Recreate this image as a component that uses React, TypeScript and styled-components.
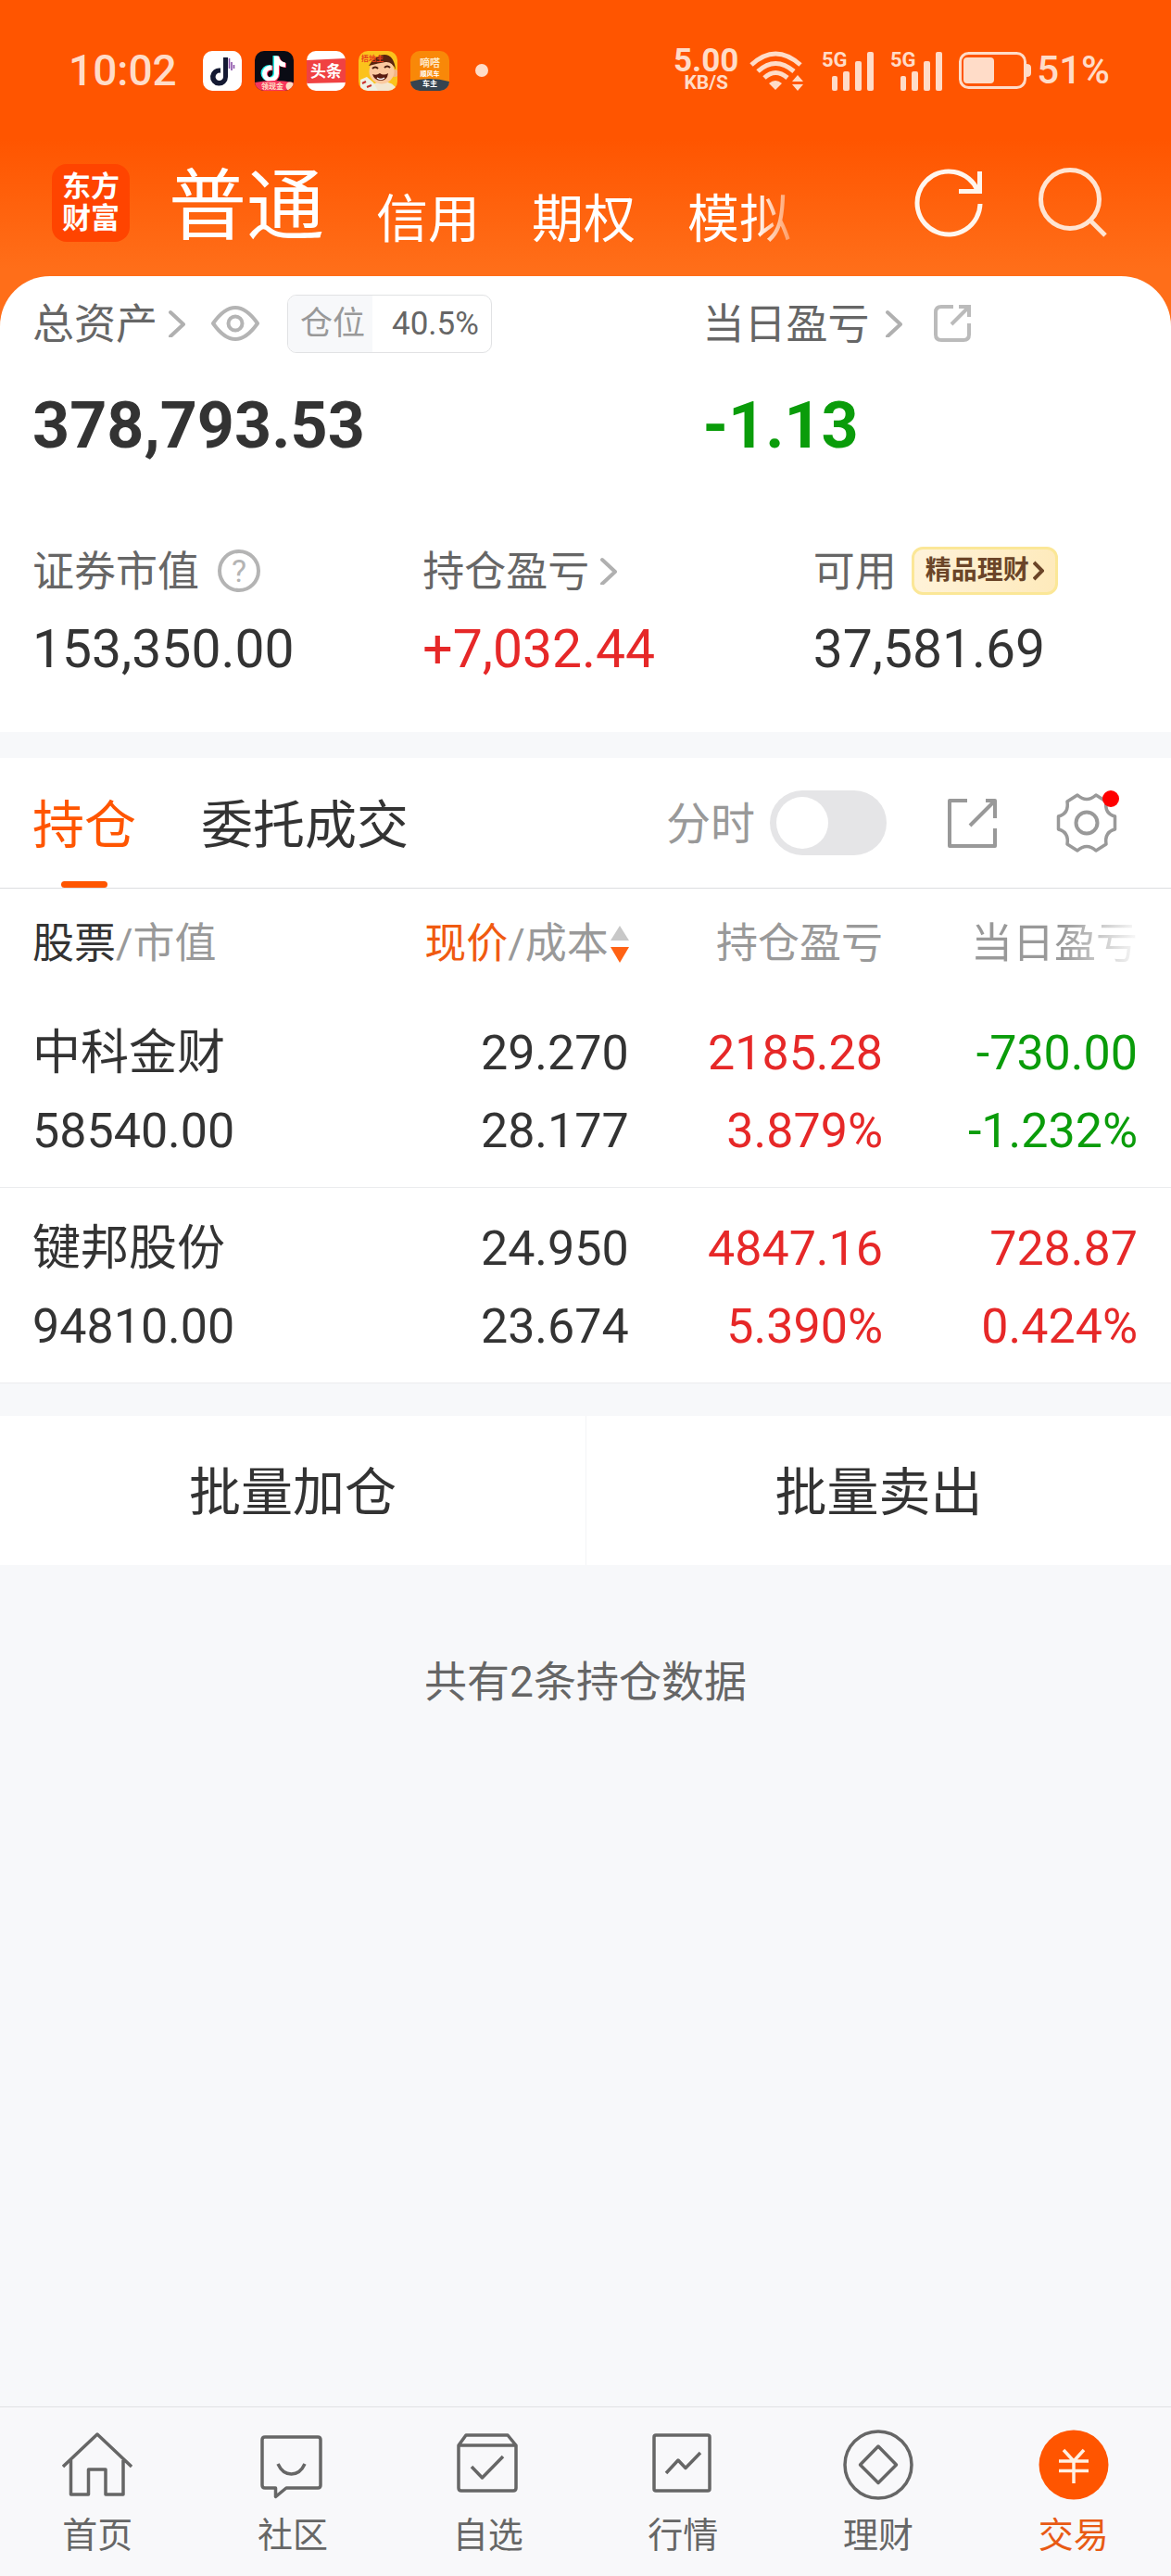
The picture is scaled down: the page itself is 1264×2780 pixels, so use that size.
import React from 'react';
import styled, { createGlobalStyle, css } from 'styled-components';

const C = {
  brand: '#ff5500',
  ink: '#333333',
  label: '#666666',
  muted: '#999999',
  faint: '#b4b4b4',
  line: '#e1e2e4',
  bg: '#f7f8fa',
  up: '#e62828',
  down: '#0a9c0a',
  status: '#ffdcc8',
};

type Tone = 'ink' | 'up' | 'down';

const GlobalStyle = createGlobalStyle`
  *, *::before, *::after { box-sizing: border-box; }
  body {
    margin: 0;
    background: ${C.bg};
    color: ${C.ink};
    font-family: Roboto, "Noto Sans CJK SC", sans-serif;
  }
  button {
    margin: 0;
    padding: 0;
    border: 0;
    background: none;
    color: inherit;
    font: inherit;
    cursor: pointer;
  }
  a { color: inherit; text-decoration: none; }
  h1, dl, dd, p { margin: 0; }
  svg { display: block; flex: none; }
`;

const Page = styled.div`
  display: flex;
  flex-direction: column;
  min-height: 100vh;
`;

const Top = styled.header`
  background: linear-gradient(${C.brand} 0, ${C.brand} 150px, #ff6e19 290px);
`;

/* ---------- status bar ---------- */

const StatusBar = styled.div`
  display: flex;
  align-items: center;
  justify-content: space-between;
  height: 152px;
  padding: 0 66px 0 74px;
  color: ${C.status};
`;

const StatusGroup = styled.div<{ $gap: number }>`
  display: flex;
  align-items: center;
  gap: ${(p) => p.$gap}px;
`;

const Clock = styled.time`
  margin-right: 14px;
  font-size: 46px;
  font-weight: 500;
  line-height: 56px;
`;

const Dot = styled.span`
  width: 14px;
  height: 14px;
  margin-left: 14px;
  border-radius: 50%;
  background: ${C.status};
`;

const Speed = styled.div`
  display: flex;
  flex-direction: column;
  align-items: center;
  font-weight: 700;
`;

const SpeedValue = styled.span`
  font-size: 35px;
  line-height: 26px;
`;

const SpeedUnit = styled.span`
  font-size: 21px;
  line-height: 20px;
`;

const Percent = styled.span`
  font-size: 42px;
  font-weight: 500;
  line-height: 48px;
`;

/* ---------- title bar ---------- */

const TitleBar = styled.div`
  display: flex;
  align-items: center;
  height: 146px;
  padding: 0 66px 12px 56px;
  color: #ffffff;
`;

const Logo = styled.div`
  display: flex;
  flex-direction: column;
  align-items: center;
  justify-content: center;
  width: 84px;
  height: 84px;
  border-radius: 16px;
  background: #ff4400;
  font-size: 31px;
  font-weight: 700;
  line-height: 34px;
`;

const Accounts = styled.nav`
  display: flex;
  align-items: flex-end;
  gap: 56px;
  flex: 1;
  margin-left: 42px;
  padding-top: 10px;
`;

const AccountTab = styled.button<{ $active?: boolean; $fade?: boolean }>`
  font-size: ${(p) => (p.$active ? 84 : 56)}px;
  line-height: ${(p) => (p.$active ? 100 : 74)}px;
  ${(p) =>
    p.$fade &&
    css`
      background: linear-gradient(90deg, #ffffff 65%, #ff9a60 100%);
      background-clip: text;
      color: transparent;
    `}
`;

const TitleActions = styled.div`
  display: flex;
  gap: 54px;
`;

/* ---------- asset summary ---------- */

const Summary = styled.section`
  padding: 19px 0 59px;
  border-radius: 54px 54px 0 0;
  background: #ffffff;
`;

const MainGrid = styled.div`
  display: grid;
  grid-template-columns: 60% 40%;
`;

const SubGrid = styled.dl`
  display: grid;
  grid-template-columns: repeat(3, 1fr);
  margin-top: 91px;
`;

const Metric = styled.div<{ $flush?: boolean }>`
  padding-left: ${(p) => (p.$flush ? 0 : 35)}px;
`;

const MetricLabel = styled.div<{ $height: number }>`
  display: flex;
  align-items: center;
  gap: 12px;
  height: ${(p) => p.$height}px;
  color: ${C.label};
  font-size: 45px;
  line-height: 52px;
  white-space: nowrap;
`;

const LabelText = styled.span`
  padding-top: 3px;
`;

const LabelLink = styled.button<{ $gap: number }>`
  display: flex;
  align-items: center;
  gap: ${(p) => p.$gap}px;
`;

const IconButton = styled.button<{ $left?: number }>`
  display: flex;
  margin-left: ${(p) => p.$left ?? 0}px;
`;

const toneColor = (t: Tone) => C[t];

const Total = styled.p<{ $tone: Tone }>`
  margin-top: 38px;
  color: ${(p) => toneColor(p.$tone)};
  font-size: 70px;
  font-weight: 700;
  line-height: 80px;
`;

const Amount = styled.dd<{ $tone: Tone }>`
  margin-top: 29px;
  color: ${(p) => toneColor(p.$tone)};
  font-size: 57px;
  line-height: 60px;
`;

const Position = styled.div`
  display: flex;
  height: 63px;
  margin-left: 18px;
  overflow: hidden;
  border: 1px solid ${C.line};
  border-radius: 10px;
  font-size: 35px;
  line-height: 61px;
`;

const PositionName = styled.span`
  padding: 0 8px 0 13px;
  background: ${C.bg};
  color: ${C.muted};
`;

const PositionValue = styled.span`
  padding: 0 13px 0 21px;
`;

const Promo = styled.a`
  display: flex;
  align-items: center;
  gap: 4px;
  height: 52px;
  margin-left: 4px;
  padding: 0 12px;
  border: 3px solid #fbe797;
  border-radius: 12px;
  background: linear-gradient(100deg, #fff3da, #feeabb);
  color: #6b4528;
  font-size: 28px;
  font-weight: 700;
  line-height: 46px;
`;

/* ---------- holdings ---------- */

const Holdings = styled.section`
  margin-top: 28px;
  background: #ffffff;
`;

const TabBar = styled.div`
  display: flex;
  align-items: center;
  justify-content: space-between;
  height: 141px;
  padding: 0 59px 0 35px;
  border-bottom: 1px solid #dcdde0;
`;

const Tabs = styled.div`
  display: flex;
  align-self: stretch;
  gap: 70px;
`;

const Tab = styled.button<{ $active?: boolean }>`
  position: relative;
  padding-top: 6px;
  color: ${(p) => (p.$active ? C.brand : C.ink)};
  font-size: 56px;
  line-height: 80px;
  ${(p) =>
    p.$active &&
    css`
      &::after {
        content: '';
        position: absolute;
        bottom: 0;
        left: calc(50% - 25px);
        width: 50px;
        height: 7px;
        border-radius: 4px;
        background: ${C.brand};
      }
    `}
`;

const Tools = styled.div`
  display: flex;
  align-items: center;
  gap: 64px;
`;

const SwitchLabel = styled.label`
  display: flex;
  align-items: center;
  gap: 16px;
  color: ${C.muted};
  font-size: 48px;
  line-height: 60px;
`;

const Switch = styled.input`
  appearance: none;
  display: flex;
  align-items: center;
  width: 126px;
  height: 70px;
  margin: 0;
  padding: 0 7px;
  border-radius: 35px;
  background: #e5e5e7;
  &::before {
    content: '';
    width: 56px;
    height: 56px;
    border-radius: 50%;
    background: #ffffff;
  }
  &:checked {
    justify-content: flex-end;
    background: ${C.brand};
  }
`;

const Table = styled.table`
  width: 100%;
  table-layout: fixed;
  border-spacing: 0;
`;

const Col = styled.col<{ $w: number }>`
  width: ${(p) => p.$w}%;
`;

const cellEdges = css`
  text-align: right;
  white-space: nowrap;
  &:first-child {
    padding-left: 35px;
    text-align: left;
  }
  &:last-child {
    padding-right: 36px;
  }
`;

const Th = styled.th`
  height: 112px;
  padding: 8px 0 0;
  color: ${C.muted};
  font-size: 45px;
  font-weight: 400;
  line-height: 60px;
  ${cellEdges}
`;

const SortButton = styled.button`
  display: inline-flex;
  align-items: center;
  gap: 2px;
`;

const Strong = styled.span<{ $brand?: boolean }>`
  color: ${(p) => (p.$brand ? '#f05a10' : C.ink)};
`;

const Faded = styled.span`
  background: linear-gradient(90deg, ${C.muted} 55%, #fafafa 100%);
  background-clip: text;
  color: transparent;
`;

const Td = styled.td<{ $tone?: Tone }>`
  padding: 24px 0 18px;
  border-bottom: 1px solid #ebecee;
  color: ${(p) => toneColor(p.$tone ?? 'ink')};
  font-size: 52px;
  ${cellEdges}
`;

const Line = styled.div`
  line-height: 84px;
`;

const Batch = styled.div`
  display: grid;
  grid-template-columns: 1fr 1fr;
  margin-top: 35px;
  background: #ffffff;
`;

const BatchButton = styled.button`
  height: 161px;
  padding-top: 5px;
  font-size: 56px;
  line-height: 80px;
  & + & {
    border-left: 1px solid #f3f4f6;
  }
`;

const Count = styled.p`
  padding: 96px 0;
  color: ${C.label};
  font-size: 46px;
  line-height: 60px;
  text-align: center;
`;

/* ---------- bottom navigation ---------- */

const BottomNav = styled.nav`
  display: grid;
  grid-template-columns: repeat(6, 1fr);
  margin-top: auto;
  border-top: 1px solid ${C.line};
  background: #f8f8fa;
`;

const NavItem = styled.a<{ $active?: boolean }>`
  display: flex;
  flex-direction: column;
  align-items: center;
  gap: 14px;
  padding: 24px 0 20px;
  color: ${(p) => (p.$active ? '#e85a14' : C.label)};
  font-size: 38px;
  line-height: 48px;
`;

/* ---------- drawings ---------- */

const AppIcon = ({ clip, children }: { clip: string; children: React.ReactNode }) => (
  <svg width="42" height="43" viewBox="0 0 42 43" aria-hidden="true">
    <clipPath id={clip}>
      <rect width="42" height="43" rx="10" />
    </clipPath>
    <g clipPath={`url(#${clip})`}>{children}</g>
  </svg>
);

const NOTE = 'M21 8h5c.6 4 3 6.500 7 7v5c-2.700 0-5-.8-7-2.200V27a9 9 0 1 1-9-9l1.500.1v5.200a4 4 0 1 0 2.500 3.700z';

const IconText = styled.text`
  font-weight: 700;
  text-anchor: middle;
`;

const AppIcons = () => (
  <>
    <AppIcon clip="app-a">
      <rect width="42" height="43" fill="#fff" />
      <path d="M22 7h5v21a9.500 9.500 0 1 1-8-9.400v5.200a4.200 4.200 0 1 0 3 4.200z" fill="#141a33" />
      <path d="M28.500 8v11M31 12v9M33.500 15v4" stroke="#8a4fa8" strokeWidth="1.600" />
    </AppIcon>
    <AppIcon clip="app-b">
      <rect width="42" height="43" fill="#0a0b14" />
      <path d={NOTE} transform="translate(-1.500 -3)" fill="#25f4ee" />
      <path d={NOTE} transform="translate(1 -2)" fill="#fe2c55" />
      <path d={NOTE} transform="translate(0 -2.500)" fill="#fff" />
      <path d="M0 34Q21 30 42 34V43H0z" fill="#f8355c" />
      <IconText x="19" y="41" fontSize="8" fill="#ffe3c8">领现金</IconText>
      <circle cx="38" cy="38" r="4.500" fill="#ffd9c0" />
    </AppIcon>
    <AppIcon clip="app-c">
      <rect width="42" height="43" fill="#fff" />
      <path d="M0 10L42 8V34L0 35z" fill="#f04142" />
      <IconText x="21" y="28" fontSize="17" fill="#fff">头条</IconText>
    </AppIcon>
    <AppIcon clip="app-d">
      <rect width="42" height="43" fill="#fbc21c" />
      <path d="M12 43Q14 33 26 33T42 43z" fill="#f3e6d0" />
      <circle cx="39" cy="24" r="4" fill="#f2b488" />
      <circle cx="25" cy="22" r="13.500" fill="#fbc9a0" />
      <path d="M11 16Q18 4 28 4T40 20Q36 11 29 12T11 16z" fill="#5a2410" />
      <path d="M15 19q3-3 6 0M28 18q3-3 6 0" stroke="#4a1c0c" strokeWidth="2" fill="none" />
      <path d="M15 25q4 2 8-1 4 3 9 0-1 8-8 8-7 0-9-7z" fill="#5a1c10" />
      <path d="M20 29q4 3 8 0" stroke="#fff" strokeWidth="1.500" fill="none" />
      <path d="M2 31l7-3 7 6 5 9H2z" fill="#eef0e4" />
      <path d="M4 35l4-2M9 39l5-2" stroke="#c8302c" strokeWidth="2" />
      <IconText x="15" y="11" fontSize="8" fill="#e8401c">捂地主</IconText>
    </AppIcon>
    <AppIcon clip="app-e">
      <rect width="42" height="43" fill="#f98808" />
      <IconText x="21" y="17" fontSize="11" fill="#ffe9c8">嘀嗒</IconText>
      <IconText x="21" y="27" fontSize="7" fill="#fff">顺风车</IconText>
      <path d="M0 33Q21 27 42 33V43H0z" fill="#364450" />
      <IconText x="21" y="38" fontSize="8" fill="#fff">车主</IconText>
    </AppIcon>
  </>
);

const Wifi = () => (
  <svg width="60" height="43" viewBox="0 0 60 43" fill="none" stroke="currentColor" strokeWidth="5" aria-hidden="true">
    <path d="M2 15Q28-9 55 15M9 22Q28 5 48 22M16 29Q28 18 41 29" />
    <path d="M28 42l-7-7q7-6 14 0z" fill="currentColor" stroke="none" />
    <path d="M52 26l6 7H46zM52 43l-6-7h12z" fill="currentColor" stroke="none" />
  </svg>
);

const CellText = styled.text`
  font-size: 22px;
  font-weight: 700;
`;

const Cellular = () => (
  <svg width="56" height="43" viewBox="0 0 56 43" overflow="visible" fill="currentColor" aria-hidden="true">
    <CellText x="0" y="17">5G</CellText>
    <rect x="11" y="27" width="6" height="16" rx="2" />
    <rect x="23" y="22" width="7" height="21" rx="2" />
    <rect x="36" y="11" width="7" height="32" rx="2" />
    <rect x="49" y="1" width="7" height="42" rx="2" />
  </svg>
);

const Battery = () => (
  <svg width="78" height="40" viewBox="0 0 78 40" aria-hidden="true">
    <rect x="1.500" y="1.500" width="70" height="37" rx="9" fill="none" stroke="currentColor" strokeWidth="3" />
    <rect x="5" y="6" width="33" height="28" rx="4" fill="currentColor" />
    <path d="M73 13q5 0 5 4v6q0 4-5 4z" fill="currentColor" />
  </svg>
);

const Refresh = () => (
  <svg width="80" height="80" viewBox="0 0 80 80" fill="none" stroke="#fff6ee" strokeWidth="5" aria-hidden="true">
    <path d="M74 41A34 34 0 1 1 71 26M73.500 6V27.500H51" />
  </svg>
);

const Search = () => (
  <svg width="80" height="80" viewBox="0 0 80 80" fill="none" stroke="#ffe4d2" strokeWidth="5" aria-hidden="true">
    <circle cx="37" cy="36" r="31.500" />
    <path d="M58 58L75 75" />
  </svg>
);

const Chevron = () => (
  <svg width="18" height="30" viewBox="0 0 18 30" fill="none" stroke="#b0b0b0" strokeWidth="4" strokeLinecap="round" strokeLinejoin="round" aria-hidden="true">
    <path d="M2 3L16 16L2 29" />
  </svg>
);

const Eye = () => (
  <svg width="52" height="38" viewBox="0 0 52 38" fill="none" stroke={C.faint} strokeWidth="4" aria-hidden="true">
    <path d="M2 19Q26-15 50 19Q26 53 2 19z" strokeLinejoin="round" />
    <circle cx="26" cy="19" r="7.500" />
  </svg>
);

const QuestionText = styled.text`
  font-size: 34px;
  text-anchor: middle;
`;

const Question = () => (
  <svg width="46" height="46" viewBox="0 0 46 46" aria-hidden="true">
    <circle cx="23" cy="23" r="21" fill="none" stroke={C.faint} strokeWidth="4" />
    <QuestionText x="23" y="35" fill={C.faint}>?</QuestionText>
  </svg>
);

const ShareSmall = () => (
  <svg width="40" height="40" viewBox="0 0 40 40" fill="none" stroke="#bbbbbb" strokeWidth="4" aria-hidden="true">
    <path d="M21 2H8Q2 2 2 8V32Q2 38 8 38H32Q38 38 38 32V20M27 2H38V13M38 2L19 21" />
  </svg>
);

const ShareLarge = () => (
  <svg width="56" height="56" viewBox="0 0 56 56" fill="none" stroke="#999999" strokeWidth="4" strokeLinejoin="round" aria-hidden="true">
    <path d="M23 4H4V53H53V34M43 4H53V23M53 4L26 31" />
  </svg>
);

const Gear = () => (
  <svg width="64" height="64" viewBox="0 0 64 64" overflow="visible" fill="none" stroke="#999999" strokeWidth="3.500" strokeLinejoin="round" aria-hidden="true">
    <path d="M22 2Q32 11 42 2L53 9Q51 22 62.500 25V39Q51 42 53 55L42 62Q32 53 22 62L11 55Q13 42 1.500 39V25Q13 22 11 9Z" />
    <circle cx="32" cy="32" r="11.500" strokeWidth="4" />
    <circle cx="58" cy="6" r="9" fill="#ff0000" stroke="none" />
  </svg>
);

const SortArrows = () => (
  <svg width="20" height="40" viewBox="0 0 20 40" aria-hidden="true">
    <path d="M10 0L20 16H0z" fill="#c8c8c8" />
    <path d="M0 23H20L10 40z" fill="#ff6214" />
  </svg>
);

const PromoChevron = () => (
  <svg width="12" height="22" viewBox="0 0 12 22" fill="none" stroke="#6b4528" strokeWidth="4" aria-hidden="true">
    <path d="M1 2L10 11L1 20" />
  </svg>
);

const NavIcon = ({ children }: { children: React.ReactNode }) => (
  <svg width="76" height="76" viewBox="0 0 76 76" fill="none" stroke="#666666" strokeWidth="3.500" strokeLinejoin="round" aria-hidden="true">
    {children}
  </svg>
);

const navItems: { name: string; icon: React.ReactNode; active?: boolean }[] = [
  { name: '首页', icon: <path d="M1 40L38 5L75 40M9.500 33V70H28.500V43H47V70H66V33" /> },
  {
    name: '社区',
    icon: (
      <>
        <path d="M8 8H65Q68 8 68 11V60Q68 63 65 63H31L19.500 72.500V63H8Q5 63 5 60V11Q5 8 8 8z" />
        <path d="M22 37Q27 48 36.500 48T51 37" />
      </>
    ),
  },
  {
    name: '自选',
    icon: (
      <>
        <path d="M6 17L14 6H59L68 17V63Q68 66 65 66H9Q6 66 6 63zM6 17H68" />
        <path d="M20 40L31.500 52L54 29" />
      </>
    ),
  },
  {
    name: '行情',
    icon: (
      <>
        <rect x="7" y="6" width="60" height="60" rx="2" />
        <path d="M20 47L33 33L41 41.500L57 25" />
      </>
    ),
  },
  {
    name: '理财',
    icon: (
      <>
        <circle cx="38" cy="38" r="36" />
        <path d="M38 18L57.500 38L38 57.500L18.500 38z" />
      </>
    ),
  },
  {
    name: '交易',
    active: true,
    icon: (
      <>
        <circle cx="38" cy="38" r="37.500" fill={C.brand} stroke="none" />
        <path d="M27 22L38 34L49 22M22 34H54M22 44.500H54M38 34V58" stroke="#fff0e2" />
      </>
    ),
  },
];

const holdings: { name: string; value: string; price: string; cost: string; gain: [string, string]; day: [string, string]; dayTone: Tone }[] = [
  { name: '中科金财', value: '58540.00', price: '29.270', cost: '28.177', gain: ['2185.28', '3.879%'], day: ['-730.00', '-1.232%'], dayTone: 'down' },
  { name: '键邦股份', value: '94810.00', price: '24.950', cost: '23.674', gain: ['4847.16', '5.390%'], day: ['728.87', '0.424%'], dayTone: 'up' },
];

export default function App() {
  return (
    <Page>
      <GlobalStyle />
      <Top>
        <StatusBar>
          <StatusGroup $gap={14}>
            <Clock>10:02</Clock>
            <AppIcons />
            <Dot />
          </StatusGroup>
          <StatusGroup $gap={18}>
            <StatusGroup $gap={12}>
              <Speed>
                <SpeedValue>5.00</SpeedValue>
                <SpeedUnit>KB/S</SpeedUnit>
              </Speed>
              <Wifi />
            </StatusGroup>
            <Cellular />
            <Cellular />
            <StatusGroup $gap={6}>
              <Battery />
              <Percent>51%</Percent>
            </StatusGroup>
          </StatusGroup>
        </StatusBar>
        <TitleBar>
          <Logo>
            <span>东方</span>
            <span>财富</span>
          </Logo>
          <Accounts>
            <AccountTab $active>普通</AccountTab>
            <AccountTab>信用</AccountTab>
            <AccountTab>期权</AccountTab>
            <AccountTab $fade>模拟</AccountTab>
          </Accounts>
          <TitleActions>
            <IconButton aria-label="刷新"><Refresh /></IconButton>
            <IconButton aria-label="搜索"><Search /></IconButton>
          </TitleActions>
        </TitleBar>
        <Summary>
          <MainGrid>
            <Metric>
              <MetricLabel $height={64}>
                <LabelLink $gap={12}><LabelText>总资产</LabelText><Chevron /></LabelLink>
                <IconButton aria-label="隐藏金额" $left={16}><Eye /></IconButton>
                <Position>
                  <PositionName>仓位</PositionName>
                  <PositionValue>40.5%</PositionValue>
                </Position>
              </MetricLabel>
              <Total $tone="ink">378,793.53</Total>
            </Metric>
            <Metric $flush>
              <MetricLabel $height={64}>
                <LabelLink $gap={18}><LabelText>当日盈亏</LabelText><Chevron /></LabelLink>
                <IconButton aria-label="分享" $left={22}><ShareSmall /></IconButton>
              </MetricLabel>
              <Total $tone="down">-1.13</Total>
            </Metric>
          </MainGrid>
          <SubGrid>
            <Metric>
              <MetricLabel as="dt" $height={52}>
                <LabelText>证券市值</LabelText>
                <IconButton aria-label="说明" $left={8}><Question /></IconButton>
              </MetricLabel>
              <Amount $tone="ink">153,350.00</Amount>
            </Metric>
            <Metric>
              <MetricLabel as="dt" $height={52}>
                <LabelLink $gap={12}><LabelText>持仓盈亏</LabelText><Chevron /></LabelLink>
              </MetricLabel>
              <Amount $tone="up">+7,032.44</Amount>
            </Metric>
            <Metric>
              <MetricLabel as="dt" $height={52}>
                <LabelText>可用</LabelText>
                <Promo href="#wealth">精品理财<PromoChevron /></Promo>
              </MetricLabel>
              <Amount $tone="ink">37,581.69</Amount>
            </Metric>
          </SubGrid>
        </Summary>
      </Top>

      <Holdings>
        <TabBar>
          <Tabs>
            <Tab $active>持仓</Tab>
            <Tab>委托成交</Tab>
          </Tabs>
          <Tools>
            <SwitchLabel htmlFor="minute">
              <LabelText>分时</LabelText>
              <Switch id="minute" type="checkbox" role="switch" />
            </SwitchLabel>
            <IconButton aria-label="分享持仓"><ShareLarge /></IconButton>
            <IconButton aria-label="设置"><Gear /></IconButton>
          </Tools>
        </TabBar>
        <Table>
          <colgroup>
            <Col $w={34} />
            <Col $w={19.7} />
            <Col $w={21.7} />
            <Col $w={24.6} />
          </colgroup>
          <thead>
            <tr>
              <Th scope="col"><Strong>股票</Strong>/市值</Th>
              <Th scope="col">
                <SortButton>
                  <span><Strong $brand>现价</Strong>/成本</span>
                  <SortArrows />
                </SortButton>
              </Th>
              <Th scope="col">持仓盈亏</Th>
              <Th scope="col"><Faded>当日盈亏</Faded></Th>
            </tr>
          </thead>
          <tbody>
            {holdings.map((h) => (
              <tr key={h.name}>
                <Td>
                  <Line>{h.name}</Line>
                  <Line>{h.value}</Line>
                </Td>
                <Td>
                  <Line>{h.price}</Line>
                  <Line>{h.cost}</Line>
                </Td>
                <Td $tone="up">
                  <Line>{h.gain[0]}</Line>
                  <Line>{h.gain[1]}</Line>
                </Td>
                <Td $tone={h.dayTone}>
                  <Line>{h.day[0]}</Line>
                  <Line>{h.day[1]}</Line>
                </Td>
              </tr>
            ))}
          </tbody>
        </Table>
      </Holdings>

      <Batch>
        <BatchButton>批量加仓</BatchButton>
        <BatchButton>批量卖出</BatchButton>
      </Batch>
      <Count>共有2条持仓数据</Count>

      <BottomNav>
        {navItems.map((n) => (
          <NavItem key={n.name} href={`#${n.name}`} $active={n.active}>
            <NavIcon>{n.icon}</NavIcon>
            {n.name}
          </NavItem>
        ))}
      </BottomNav>
    </Page>
  );
}
